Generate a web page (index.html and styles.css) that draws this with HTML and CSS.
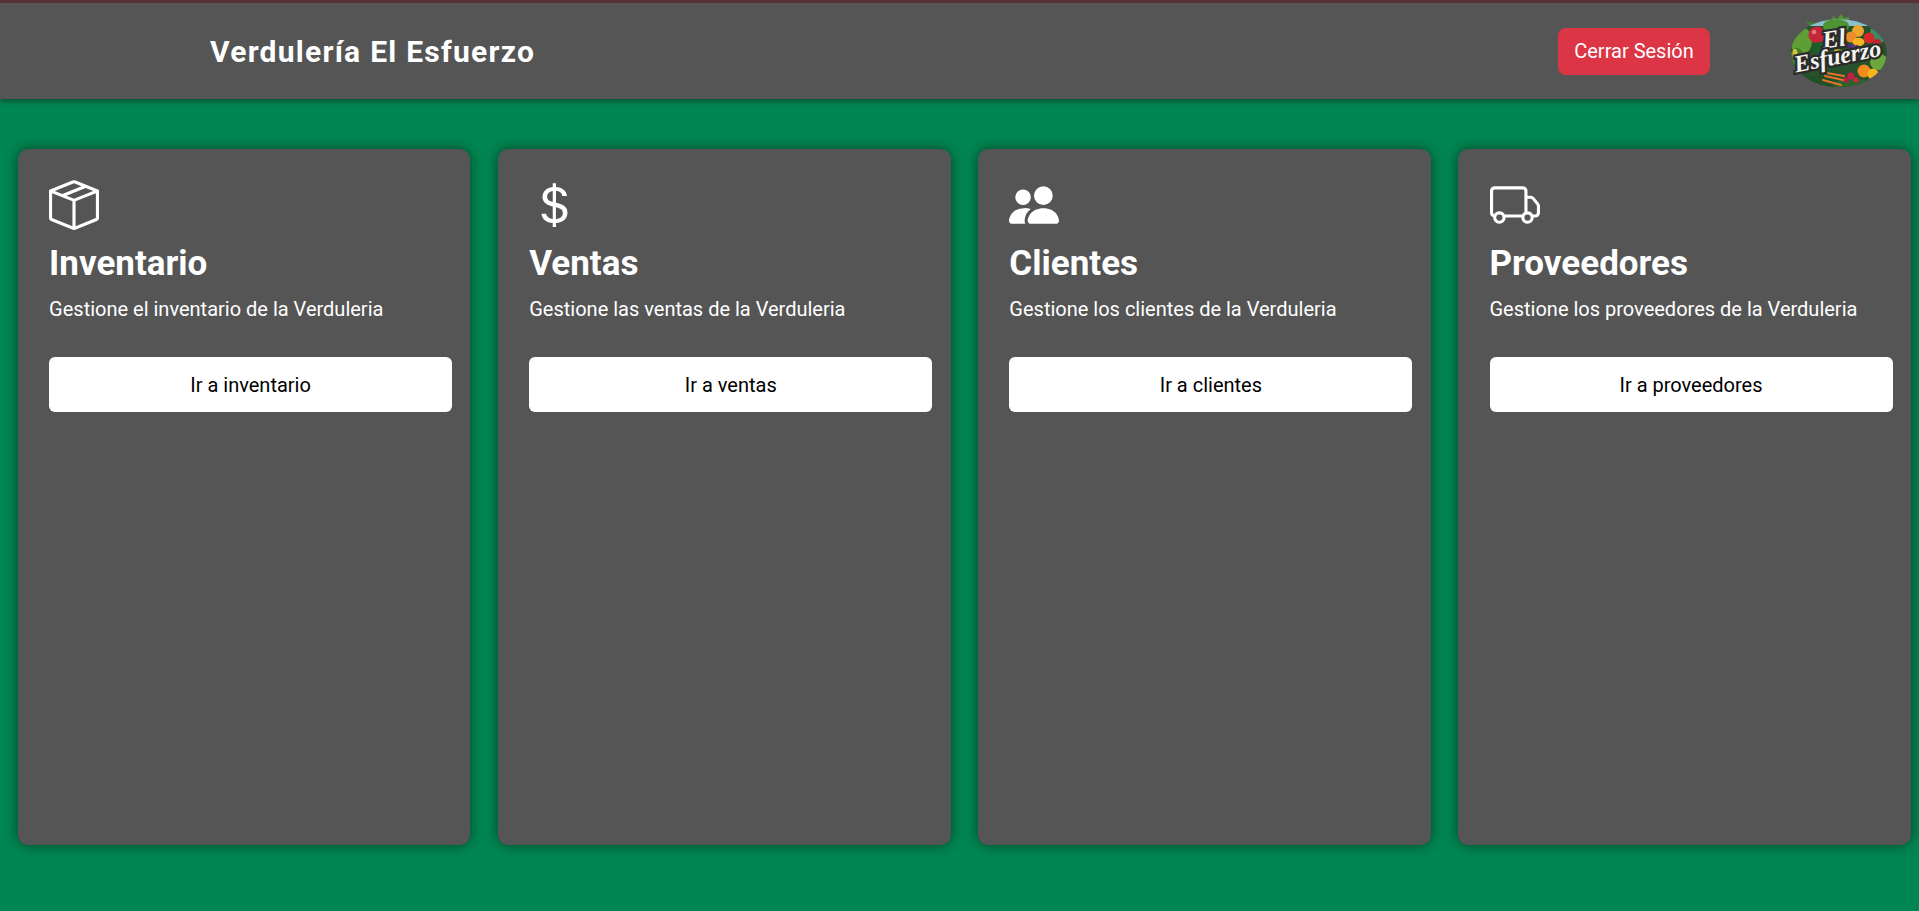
FILE: index.html
```html
<!DOCTYPE html>
<html lang="es">
<head>
<meta charset="utf-8">
<title>Verdulería El Esfuerzo</title>
<link rel="stylesheet" href="styles.css">
</head>
<body>
<header class="topbar">
  <h1 class="brand">Verdulería El Esfuerzo</h1>
  <button class="logout">Cerrar Sesión</button>
  <svg class="logo" viewBox="0 0 100 76" role="img" aria-label="El Esfuerzo">
    <defs>
      <clipPath id="oval"><ellipse cx="49.7" cy="40" rx="48" ry="34"/></clipPath>
    </defs>
    <path d="M42 10 L44 3 L48 6 L52 1 L55 5 L60 4 L60 12 Z" fill="#4f9432"/>
    <path d="M22 14 L16 8 L27 10 L30 14 Z" fill="#3f7f33"/>
    <ellipse cx="49.7" cy="40" rx="48" ry="34" fill="#27512a"/>
    <g clip-path="url(#oval)">
      <rect x="0" y="0" width="100" height="13" fill="#8cc0cc"/>
      <ellipse cx="90" cy="20" rx="9" ry="10" fill="#3d8a66"/>
      <ellipse cx="12" cy="28" rx="11" ry="14" fill="#5f9e35"/>
      <ellipse cx="8" cy="44" rx="7" ry="9" fill="#3f7f2e"/>
      <ellipse cx="47" cy="13" rx="13" ry="7" fill="#4f9432"/>
      <ellipse cx="90" cy="49" rx="9" ry="8" fill="#6aa83c"/>
      <ellipse cx="32" cy="70" rx="18" ry="7" fill="#1f4f24"/>
      <ellipse cx="64" cy="72" rx="20" ry="6" fill="#2a632b"/>
      <circle cx="28" cy="22" r="8.5" fill="#c4263a"/>
      <circle cx="25" cy="19" r="2.3" fill="#e4757e"/>
      <ellipse cx="30" cy="35" rx="7" ry="6" fill="#1b5e28"/>
      <circle cx="69" cy="18" r="6" fill="#eda42c"/>
      <circle cx="62" cy="24" r="5.5" fill="#ec8a2c"/>
      <circle cx="80" cy="25" r="5.5" fill="#d42a25"/>
      <circle cx="88" cy="30" r="4" fill="#c5202a"/>
      <ellipse cx="69.5" cy="29" rx="6" ry="4.3" fill="#f7b320"/>
      <circle cx="60" cy="33" r="1.9" fill="#4b2a7d"/>
      <circle cx="64" cy="33" r="1.9" fill="#5b3590"/>
      <circle cx="68" cy="34" r="1.9" fill="#432470"/>
      <circle cx="62" cy="36" r="1.9" fill="#432470"/>
      <ellipse cx="49" cy="38" rx="4" ry="1.8" fill="#e2c52e"/>
      <ellipse cx="6" cy="41" rx="2.5" ry="5" fill="#d8c53a"/>
      <circle cx="75" cy="58" r="6.5" fill="#f28a1e"/>
      <circle cx="84" cy="61" r="5.5" fill="#f5b41e"/>
      <circle cx="62" cy="63" r="3.6" fill="#c31f45"/>
      <circle cx="67" cy="67" r="2.6" fill="#d4233b"/>
      <circle cx="57" cy="67" r="2.8" fill="#b71c3c"/>
      <path class="carrot" d="M36 63 L54 67 M34 67 L52 72 M38 60 L55 63"/>
    </g>
    <text class="logo-el" x="46" y="34" transform="rotate(-8 46 34)">El</text>
    <text class="logo-word" x="50" y="51" transform="rotate(-11 50 51)">Esfuerzo</text>
  </svg>
</header>

<main class="cards">
  <article class="card">
    <svg class="icon" viewBox="0 0 16 16"><path d="M8.186 1.113a.5.5 0 0 0-.372 0L1.846 3.5l2.404.961L10.404 2l-2.218-.887zm3.564 1.426L5.596 5 8 5.961 14.154 3.5l-2.404-.961zm3.25 1.7-6.5 2.6v7.922l6.5-2.6V4.24zM7.5 14.762V6.838L1 4.239v7.925l6.5 2.6zM7.443.184a1.5 1.5 0 0 1 1.114 0l7.129 2.852A.5.5 0 0 1 16 3.5v8.662a1 1 0 0 1-.629.928l-7.185 2.874a.5.5 0 0 1-.372 0L.63 13.09a1 1 0 0 1-.63-.928V3.5a.5.5 0 0 1 .314-.464L7.443.184z"/></svg>
    <h2 class="card-title">Inventario</h2>
    <p class="card-text">Gestione el inventario de la Verduleria</p>
    <a class="card-link" href="#">Ir a inventario</a>
  </article>
  <article class="card">
    <svg class="icon" viewBox="0 0 16 16"><path d="M4 10.781c.148 1.667 1.513 2.85 3.591 3.003V15h1.043v-1.216c2.27-.179 3.678-1.438 3.678-3.3 0-1.59-.947-2.51-2.956-3.028l-.722-.187V3.467c1.122.11 1.879.714 2.07 1.616h1.47c-.166-1.6-1.54-2.748-3.54-2.875V1H7.591v1.233c-1.939.23-3.27 1.472-3.27 3.156 0 1.454.966 2.483 2.661 2.917l.61.162v4.031c-1.149-.17-1.94-.8-2.131-1.718H4zm3.391-3.836c-1.043-.263-1.6-.825-1.6-1.616 0-.944.704-1.641 1.8-1.828v3.495l-.2-.051zm1.591 1.872c1.287.323 1.852.859 1.852 1.769 0 1.097-.826 1.828-2.223 1.939V8.73l.371.086z"/></svg>
    <h2 class="card-title">Ventas</h2>
    <p class="card-text">Gestione las ventas de la Verduleria</p>
    <a class="card-link" href="#">Ir a ventas</a>
  </article>
  <article class="card">
    <svg class="icon" viewBox="0 0 16 16"><path d="M7 14s-1 0-1-1 1-4 5-4 5 3 5 4-1 1-1 1H7Zm4-6a3 3 0 1 0 0-6 3 3 0 0 0 0 6Zm-5.784 6A2.238 2.238 0 0 1 5 13c0-1.355.68-2.75 1.936-3.72A6.325 6.325 0 0 0 5 9c-4 0-5 3-5 4s1 1 1 1h4.216ZM4.5 8a2.5 2.5 0 1 0 0-5 2.5 2.5 0 0 0 0 5Z"/></svg>
    <h2 class="card-title">Clientes</h2>
    <p class="card-text">Gestione los clientes de la Verduleria</p>
    <a class="card-link" href="#">Ir a clientes</a>
  </article>
  <article class="card">
    <svg class="icon" viewBox="0 0 16 16"><path d="M0 3.5A1.5 1.5 0 0 1 1.5 2h9A1.5 1.5 0 0 1 12 3.5V5h1.02a1.5 1.5 0 0 1 1.17.563l1.481 1.85a1.5 1.5 0 0 1 .329.938V10.5a1.5 1.5 0 0 1-1.5 1.5H14a2 2 0 1 1-4 0H5a2 2 0 1 1-3.998-.085A1.5 1.5 0 0 1 0 10.5v-7zm1.294 7.456A1.999 1.999 0 0 1 4.732 11h5.536a2.01 2.01 0 0 1 .732-.732V3.5a.5.5 0 0 0-.5-.5h-9a.5.5 0 0 0-.5.5v7a.5.5 0 0 0 .294.456zM12 10a2 2 0 0 1 1.732 1h.768a.5.5 0 0 0 .5-.5V8.35a.5.5 0 0 0-.11-.312l-1.48-1.85A.5.5 0 0 0 13.02 6H12v4zm-9 1a1 1 0 1 0 0 2 1 1 0 0 0 0-2zm9 0a1 1 0 1 0 0 2 1 1 0 0 0 0-2z"/></svg>
    <h2 class="card-title">Proveedores</h2>
    <p class="card-text">Gestione los proveedores de la Verduleria</p>
    <a class="card-link" href="#">Ir a proveedores</a>
  </article>
</main>
</body>
</html>
```
FILE: styles.css
```css
* {
  box-sizing: border-box;
}

html,
body {
  height: 100%;
}

body {
  margin: 0;
  display: flex;
  flex-direction: column;
  overflow: hidden;
  background: #008751;
  font-family: Roboto, "Liberation Sans", sans-serif;
  color: #fff;
}

.topbar {
  flex: none;
  height: 99px;
  display: flex;
  align-items: center;
  padding-left: 210px;
  padding-right: 30px;
  background: #555;
  border-top: 3px solid #553333;
  box-shadow: 0 2px 6px rgba(0, 0, 0, 0.45);
  position: relative;
}

.brand {
  flex: 1;
  margin: 0;
  font-size: 30px;
  font-weight: 700;
  letter-spacing: 1.25px;
}

.logout {
  width: 152px;
  height: 47px;
  margin-right: 79px;
  border: none;
  border-radius: 8px;
  background: #dc3545;
  color: #fff;
  font: 400 20px Roboto, sans-serif;
}

.logo {
  width: 100px;
  height: 76px;
  display: block;
}

.carrot {
  fill: none;
  stroke: #e8702a;
  stroke-width: 2;
  stroke-linecap: round;
}

.logo-el,
.logo-word {
  fill: #f4f4f0;
  stroke: #2b2b2b;
  stroke-width: 4.5px;
  paint-order: stroke;
  text-anchor: middle;
  font-family: "Liberation Serif", serif;
  font-style: italic;
  font-weight: 700;
}

.logo-el {
  font-size: 25px;
}

.logo-word {
  font-size: 24px;
}

.cards {
  flex: 1;
  min-height: 0;
  display: grid;
  grid-template-columns: repeat(4, 452.5px);
  column-gap: 27.65px;
  padding: 50px 0 66px 17.9px;
}

.card {
  display: flex;
  flex-direction: column;
  align-items: flex-start;
  padding: 31px 18.3px 0 31.2px;
  background: #555;
  border-radius: 10px;
  box-shadow: 0 0 14px rgba(0, 0, 0, 0.5);
}

.icon {
  width: 50px;
  height: 50px;
  fill: #fff;
  display: block;
}

.card-title {
  margin: 13px 0 0;
  font-size: 35px;
  font-weight: 700;
  line-height: 42px;
}

.card-text {
  margin: 11px 0 0;
  font-size: 20px;
  line-height: 27px;
}

.card-link {
  align-self: stretch;
  height: 55px;
  margin-top: 34px;
  display: flex;
  align-items: center;
  justify-content: center;
  background: #fff;
  border-radius: 6px;
  color: #000;
  font-size: 20px;
  text-decoration: none;
}
```
